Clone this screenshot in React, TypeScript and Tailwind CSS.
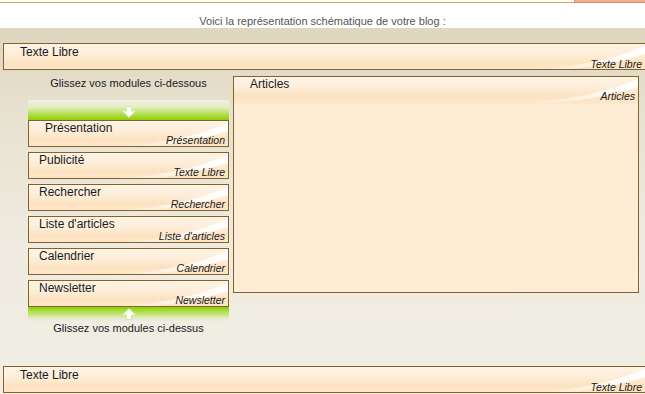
import React from "react";

function Highlight() {
  return (
    <svg className="absolute right-0 top-0" width="110" height="27" viewBox="0 0 110 27">
      <defs>
        <linearGradient id="hl" x1="0" y1="0" x2="1" y2="0">
          <stop offset="0" stopColor="#ffffff" stopOpacity="0" />
          <stop offset="0.6" stopColor="#ffffff" stopOpacity="0.7" />
          <stop offset="1" stopColor="#ffffff" stopOpacity="1" />
        </linearGradient>
      </defs>
      <path d="M0,25 C40,23 80,15 110,2 L110,10 C80,20 40,26 0,27 Z" fill="url(#hl)" />
    </svg>
  );
}

function Box({
  title,
  label,
  className = "",
  titleClass = "pl-[10px]",
  labelClass = "pr-[3px]",
}: {
  title: string;
  label: string;
  className?: string;
  titleClass?: string;
  labelClass?: string;
}) {
  return (
    <div className={`relative overflow-hidden border border-[#86622a] bg-[#feecd5] ${className}`}>
      <div className="absolute inset-x-0 top-0 h-[27px] bg-[linear-gradient(to_bottom,#fff3e4_0%,#fdeed9_40%,#fce2c0_68%,#fde8cb_100%)]" />
      <Highlight />
      <div className="relative flex h-[25px] flex-col">
        <div className={`text-[12px] leading-[14px] text-[#1a1a1a] ${titleClass}`}>{title}</div>
        <div className={`mt-auto self-end text-[10.5px] italic leading-[11px] text-[#1a1a1a] ${labelClass}`}>{label}</div>
      </div>
    </div>
  );
}

function Arrow({ up = false }: { up?: boolean }) {
  return (
    <svg width="14" height="12" viewBox="0 0 14 12" className={up ? "rotate-180" : ""}>
      <path d="M4.5,0.5 H9.5 V5 H13.5 L7,11.5 L0.5,5 H4.5 Z" fill="#ffffff" stroke="#cfe9a0" strokeWidth="1" />
    </svg>
  );
}

const modules: { title: string; label: string }[] = [
  { title: "Présentation", label: "Présentation" },
  { title: "Publicité", label: "Texte Libre" },
  { title: "Rechercher", label: "Rechercher" },
  { title: "Liste d'articles", label: "Liste d'articles" },
  { title: "Calendrier", label: "Calendrier" },
  { title: "Newsletter", label: "Newsletter" },
];

export default function App() {
  return (
    <div className="flex h-[394px] w-[645px] flex-col overflow-hidden bg-white font-['Liberation_Sans',Arial,sans-serif]">
      <div className="flex h-[3px]">
        <div className="flex-1 border-b border-[#dca560]" />
        <div className="w-[71px] border-b border-l border-[#d98f66] bg-[#f8a986]" />
      </div>
      <div className="h-[25px] pt-[12px] text-center text-[11px] leading-[13px] text-[#555555]">
        Voici la représentation schématique de votre blog :
      </div>
      <div className="flex flex-1 flex-col bg-[linear-gradient(to_bottom,#ded6bf_0%,#e8e2d1_25%,#efebe0_60%,#f1eee5_100%)] pt-[15px]">
        <Box title="Texte Libre" label="Texte Libre" className="ml-[3px] h-[27px] w-[643px] shrink-0" titleClass="pl-[16px] pt-[1px]" />
        <div className="mt-[6px] flex pl-[28px]">
          <div className="flex w-[201px] flex-col">
            <div className="mt-[1px] text-center text-[11px] leading-[13px] text-[#1a1a1a]">Glissez vos modules ci-dessous</div>
            <div className="mt-[10px] flex h-[20px] items-end justify-center bg-[linear-gradient(to_bottom,#f2efe2_0%,#e6edc4_35%,#b4e050_70%,#8ccf08_100%)] pb-[2px]">
              <Arrow />
            </div>
            <div className="flex flex-col gap-[5px]">
              {modules.map((m, i) => (
                <Box
                  key={m.title}
                  title={m.title}
                  label={m.label}
                  className="h-[27px]"
                  titleClass={i === 0 ? "pl-[16px]" : "pl-[10px]"}
                />
              ))}
            </div>
            <div className="flex h-[15px] items-start justify-center bg-[linear-gradient(to_bottom,#8ccf08_0%,#b4e050_35%,#e4ecc8_75%,#f0ede2_100%)] pt-[1px]">
              <Arrow up />
            </div>
            <div className="text-center text-[11px] leading-[13px] text-[#1a1a1a]">Glissez vos modules ci-dessus</div>
          </div>
          <Box title="Articles" label="Articles" className="ml-[4px] h-[217px] w-[406px]" titleClass="pl-[16px]" />
        </div>
        <Box title="Texte Libre" label="Texte Libre" className="mb-[1px] ml-[3px] mt-auto h-[27px] w-[643px] shrink-0" titleClass="pl-[16px] pt-[1px]" />
      </div>
    </div>
  );
}
